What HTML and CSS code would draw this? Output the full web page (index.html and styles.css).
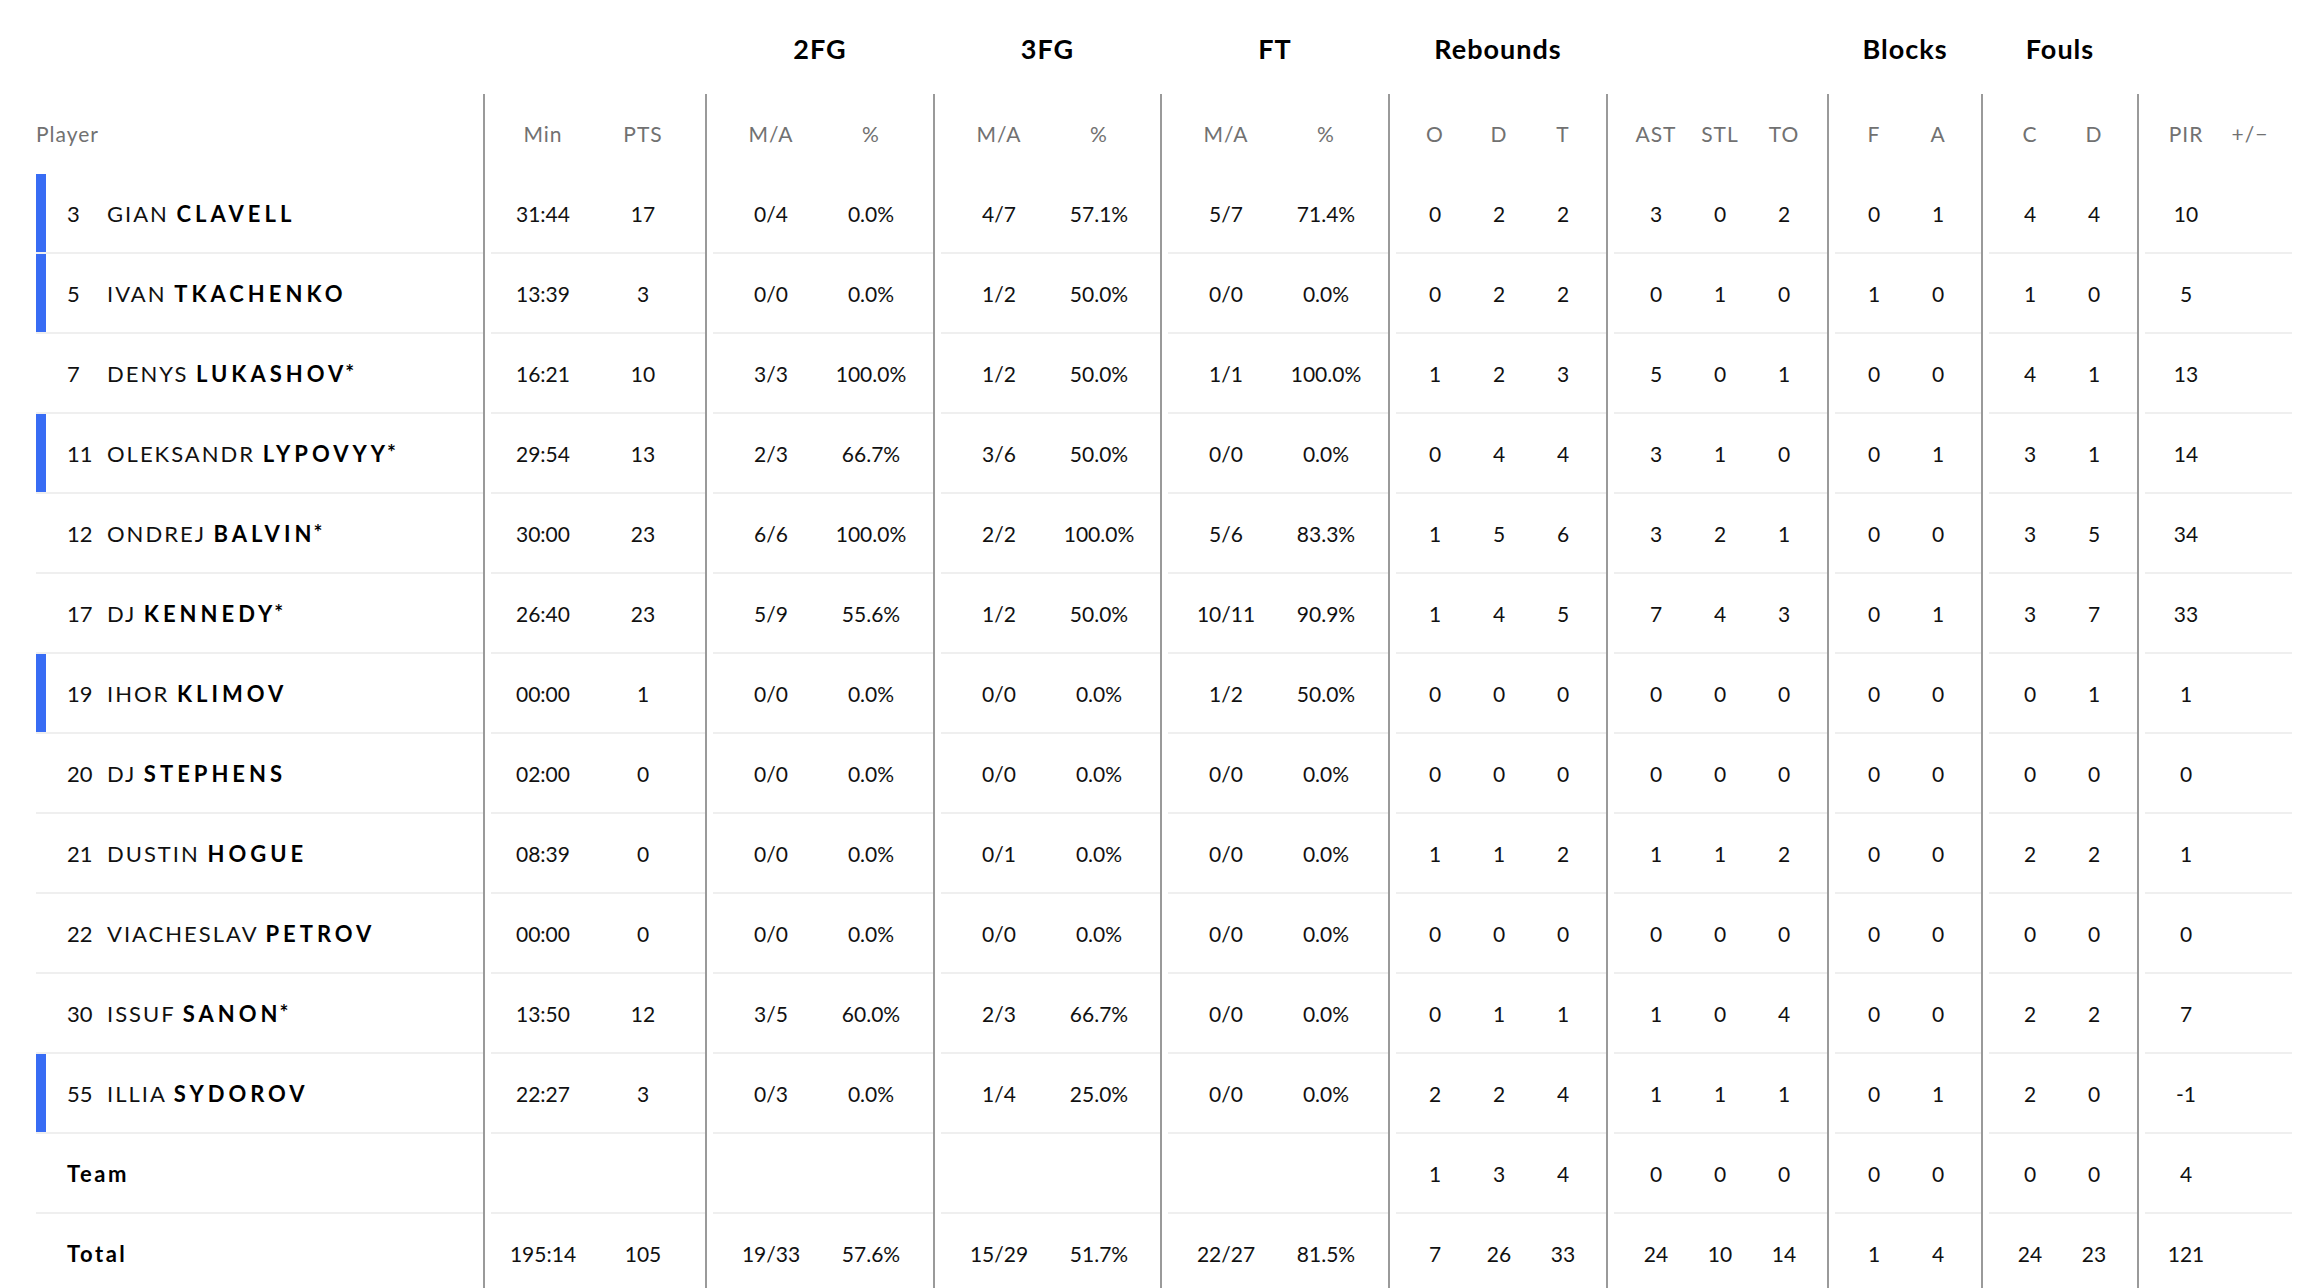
FILE: index.html
```html
<!DOCTYPE html>
<html lang="en">
<head>
<meta charset="utf-8">
<title>Box score</title>
<link rel="stylesheet" href="styles.css">
</head>
<body>
<div class="box">
  <div class="row titles">
    <div class="g gp"><div class="gi"></div></div>
    <div class="g gm"><div class="gi"></div></div>
    <div class="g gw"><div class="gi">2FG</div></div>
    <div class="g gw g3"><div class="gi">3FG</div></div>
    <div class="g gw"><div class="gi">FT</div></div>
    <div class="g gr"><div class="gi">Rebounds</div></div>
    <div class="g ga"><div class="gi"></div></div>
    <div class="g gb"><div class="gi">Blocks</div></div>
    <div class="g gf"><div class="gi">Fouls</div></div>
    <div class="g gz"><div class="gi"></div></div>
  </div>

  <div class="row head">
    <div class="g gp"><div class="gi">Player</div></div>
    <div class="g gm"><div class="gi"><span class="c">Min</span><span class="c">PTS</span></div></div>
    <div class="g gw"><div class="gi"><span class="c">M/A</span><span class="c">%</span></div></div>
    <div class="g gw g3"><div class="gi"><span class="c">M/A</span><span class="c">%</span></div></div>
    <div class="g gw"><div class="gi"><span class="c">M/A</span><span class="c">%</span></div></div>
    <div class="g gr"><div class="gi"><span class="c">O</span><span class="c">D</span><span class="c">T</span></div></div>
    <div class="g ga"><div class="gi"><span class="c">AST</span><span class="c">STL</span><span class="c">TO</span></div></div>
    <div class="g gb"><div class="gi"><span class="c">F</span><span class="c">A</span></div></div>
    <div class="g gf"><div class="gi"><span class="c">C</span><span class="c">D</span></div></div>
    <div class="g gz"><div class="gi"><span class="c">PIR</span><span class="c">+/−</span></div></div>
  </div>

  <div class="row">
    <div class="g gp"><div class="gi"><div class="pl bar"><span class="no">3</span><span class="nm">GIAN <b>CLAVELL</b></span></div></div></div>
    <div class="g gm"><div class="gi"><span class="c">31:44</span><span class="c">17</span></div></div>
    <div class="g gw"><div class="gi"><span class="c">0/4</span><span class="c">0.0%</span></div></div>
    <div class="g gw g3"><div class="gi"><span class="c">4/7</span><span class="c">57.1%</span></div></div>
    <div class="g gw"><div class="gi"><span class="c">5/7</span><span class="c">71.4%</span></div></div>
    <div class="g gr"><div class="gi"><span class="c">0</span><span class="c">2</span><span class="c">2</span></div></div>
    <div class="g ga"><div class="gi"><span class="c">3</span><span class="c">0</span><span class="c">2</span></div></div>
    <div class="g gb"><div class="gi"><span class="c">0</span><span class="c">1</span></div></div>
    <div class="g gf"><div class="gi"><span class="c">4</span><span class="c">4</span></div></div>
    <div class="g gz"><div class="gi"><span class="c">10</span><span class="c"></span></div></div>
  </div>

  <div class="row">
    <div class="g gp"><div class="gi"><div class="pl bar"><span class="no">5</span><span class="nm">IVAN <b>TKACHENKO</b></span></div></div></div>
    <div class="g gm"><div class="gi"><span class="c">13:39</span><span class="c">3</span></div></div>
    <div class="g gw"><div class="gi"><span class="c">0/0</span><span class="c">0.0%</span></div></div>
    <div class="g gw g3"><div class="gi"><span class="c">1/2</span><span class="c">50.0%</span></div></div>
    <div class="g gw"><div class="gi"><span class="c">0/0</span><span class="c">0.0%</span></div></div>
    <div class="g gr"><div class="gi"><span class="c">0</span><span class="c">2</span><span class="c">2</span></div></div>
    <div class="g ga"><div class="gi"><span class="c">0</span><span class="c">1</span><span class="c">0</span></div></div>
    <div class="g gb"><div class="gi"><span class="c">1</span><span class="c">0</span></div></div>
    <div class="g gf"><div class="gi"><span class="c">1</span><span class="c">0</span></div></div>
    <div class="g gz"><div class="gi"><span class="c">5</span><span class="c"></span></div></div>
  </div>

  <div class="row">
    <div class="g gp"><div class="gi"><div class="pl"><span class="no">7</span><span class="nm">DENYS <b>LUKASHOV<sup>*</sup></b></span></div></div></div>
    <div class="g gm"><div class="gi"><span class="c">16:21</span><span class="c">10</span></div></div>
    <div class="g gw"><div class="gi"><span class="c">3/3</span><span class="c">100.0%</span></div></div>
    <div class="g gw g3"><div class="gi"><span class="c">1/2</span><span class="c">50.0%</span></div></div>
    <div class="g gw"><div class="gi"><span class="c">1/1</span><span class="c">100.0%</span></div></div>
    <div class="g gr"><div class="gi"><span class="c">1</span><span class="c">2</span><span class="c">3</span></div></div>
    <div class="g ga"><div class="gi"><span class="c">5</span><span class="c">0</span><span class="c">1</span></div></div>
    <div class="g gb"><div class="gi"><span class="c">0</span><span class="c">0</span></div></div>
    <div class="g gf"><div class="gi"><span class="c">4</span><span class="c">1</span></div></div>
    <div class="g gz"><div class="gi"><span class="c">13</span><span class="c"></span></div></div>
  </div>

  <div class="row">
    <div class="g gp"><div class="gi"><div class="pl bar"><span class="no">11</span><span class="nm">OLEKSANDR <b>LYPOVYY<sup>*</sup></b></span></div></div></div>
    <div class="g gm"><div class="gi"><span class="c">29:54</span><span class="c">13</span></div></div>
    <div class="g gw"><div class="gi"><span class="c">2/3</span><span class="c">66.7%</span></div></div>
    <div class="g gw g3"><div class="gi"><span class="c">3/6</span><span class="c">50.0%</span></div></div>
    <div class="g gw"><div class="gi"><span class="c">0/0</span><span class="c">0.0%</span></div></div>
    <div class="g gr"><div class="gi"><span class="c">0</span><span class="c">4</span><span class="c">4</span></div></div>
    <div class="g ga"><div class="gi"><span class="c">3</span><span class="c">1</span><span class="c">0</span></div></div>
    <div class="g gb"><div class="gi"><span class="c">0</span><span class="c">1</span></div></div>
    <div class="g gf"><div class="gi"><span class="c">3</span><span class="c">1</span></div></div>
    <div class="g gz"><div class="gi"><span class="c">14</span><span class="c"></span></div></div>
  </div>

  <div class="row">
    <div class="g gp"><div class="gi"><div class="pl"><span class="no">12</span><span class="nm">ONDREJ <b>BALVIN<sup>*</sup></b></span></div></div></div>
    <div class="g gm"><div class="gi"><span class="c">30:00</span><span class="c">23</span></div></div>
    <div class="g gw"><div class="gi"><span class="c">6/6</span><span class="c">100.0%</span></div></div>
    <div class="g gw g3"><div class="gi"><span class="c">2/2</span><span class="c">100.0%</span></div></div>
    <div class="g gw"><div class="gi"><span class="c">5/6</span><span class="c">83.3%</span></div></div>
    <div class="g gr"><div class="gi"><span class="c">1</span><span class="c">5</span><span class="c">6</span></div></div>
    <div class="g ga"><div class="gi"><span class="c">3</span><span class="c">2</span><span class="c">1</span></div></div>
    <div class="g gb"><div class="gi"><span class="c">0</span><span class="c">0</span></div></div>
    <div class="g gf"><div class="gi"><span class="c">3</span><span class="c">5</span></div></div>
    <div class="g gz"><div class="gi"><span class="c">34</span><span class="c"></span></div></div>
  </div>

  <div class="row">
    <div class="g gp"><div class="gi"><div class="pl"><span class="no">17</span><span class="nm">DJ <b>KENNEDY<sup>*</sup></b></span></div></div></div>
    <div class="g gm"><div class="gi"><span class="c">26:40</span><span class="c">23</span></div></div>
    <div class="g gw"><div class="gi"><span class="c">5/9</span><span class="c">55.6%</span></div></div>
    <div class="g gw g3"><div class="gi"><span class="c">1/2</span><span class="c">50.0%</span></div></div>
    <div class="g gw"><div class="gi"><span class="c">10/11</span><span class="c">90.9%</span></div></div>
    <div class="g gr"><div class="gi"><span class="c">1</span><span class="c">4</span><span class="c">5</span></div></div>
    <div class="g ga"><div class="gi"><span class="c">7</span><span class="c">4</span><span class="c">3</span></div></div>
    <div class="g gb"><div class="gi"><span class="c">0</span><span class="c">1</span></div></div>
    <div class="g gf"><div class="gi"><span class="c">3</span><span class="c">7</span></div></div>
    <div class="g gz"><div class="gi"><span class="c">33</span><span class="c"></span></div></div>
  </div>

  <div class="row">
    <div class="g gp"><div class="gi"><div class="pl bar"><span class="no">19</span><span class="nm">IHOR <b>KLIMOV</b></span></div></div></div>
    <div class="g gm"><div class="gi"><span class="c">00:00</span><span class="c">1</span></div></div>
    <div class="g gw"><div class="gi"><span class="c">0/0</span><span class="c">0.0%</span></div></div>
    <div class="g gw g3"><div class="gi"><span class="c">0/0</span><span class="c">0.0%</span></div></div>
    <div class="g gw"><div class="gi"><span class="c">1/2</span><span class="c">50.0%</span></div></div>
    <div class="g gr"><div class="gi"><span class="c">0</span><span class="c">0</span><span class="c">0</span></div></div>
    <div class="g ga"><div class="gi"><span class="c">0</span><span class="c">0</span><span class="c">0</span></div></div>
    <div class="g gb"><div class="gi"><span class="c">0</span><span class="c">0</span></div></div>
    <div class="g gf"><div class="gi"><span class="c">0</span><span class="c">1</span></div></div>
    <div class="g gz"><div class="gi"><span class="c">1</span><span class="c"></span></div></div>
  </div>

  <div class="row">
    <div class="g gp"><div class="gi"><div class="pl"><span class="no">20</span><span class="nm">DJ <b>STEPHENS</b></span></div></div></div>
    <div class="g gm"><div class="gi"><span class="c">02:00</span><span class="c">0</span></div></div>
    <div class="g gw"><div class="gi"><span class="c">0/0</span><span class="c">0.0%</span></div></div>
    <div class="g gw g3"><div class="gi"><span class="c">0/0</span><span class="c">0.0%</span></div></div>
    <div class="g gw"><div class="gi"><span class="c">0/0</span><span class="c">0.0%</span></div></div>
    <div class="g gr"><div class="gi"><span class="c">0</span><span class="c">0</span><span class="c">0</span></div></div>
    <div class="g ga"><div class="gi"><span class="c">0</span><span class="c">0</span><span class="c">0</span></div></div>
    <div class="g gb"><div class="gi"><span class="c">0</span><span class="c">0</span></div></div>
    <div class="g gf"><div class="gi"><span class="c">0</span><span class="c">0</span></div></div>
    <div class="g gz"><div class="gi"><span class="c">0</span><span class="c"></span></div></div>
  </div>

  <div class="row">
    <div class="g gp"><div class="gi"><div class="pl"><span class="no">21</span><span class="nm">DUSTIN <b>HOGUE</b></span></div></div></div>
    <div class="g gm"><div class="gi"><span class="c">08:39</span><span class="c">0</span></div></div>
    <div class="g gw"><div class="gi"><span class="c">0/0</span><span class="c">0.0%</span></div></div>
    <div class="g gw g3"><div class="gi"><span class="c">0/1</span><span class="c">0.0%</span></div></div>
    <div class="g gw"><div class="gi"><span class="c">0/0</span><span class="c">0.0%</span></div></div>
    <div class="g gr"><div class="gi"><span class="c">1</span><span class="c">1</span><span class="c">2</span></div></div>
    <div class="g ga"><div class="gi"><span class="c">1</span><span class="c">1</span><span class="c">2</span></div></div>
    <div class="g gb"><div class="gi"><span class="c">0</span><span class="c">0</span></div></div>
    <div class="g gf"><div class="gi"><span class="c">2</span><span class="c">2</span></div></div>
    <div class="g gz"><div class="gi"><span class="c">1</span><span class="c"></span></div></div>
  </div>

  <div class="row">
    <div class="g gp"><div class="gi"><div class="pl"><span class="no">22</span><span class="nm">VIACHESLAV <b>PETROV</b></span></div></div></div>
    <div class="g gm"><div class="gi"><span class="c">00:00</span><span class="c">0</span></div></div>
    <div class="g gw"><div class="gi"><span class="c">0/0</span><span class="c">0.0%</span></div></div>
    <div class="g gw g3"><div class="gi"><span class="c">0/0</span><span class="c">0.0%</span></div></div>
    <div class="g gw"><div class="gi"><span class="c">0/0</span><span class="c">0.0%</span></div></div>
    <div class="g gr"><div class="gi"><span class="c">0</span><span class="c">0</span><span class="c">0</span></div></div>
    <div class="g ga"><div class="gi"><span class="c">0</span><span class="c">0</span><span class="c">0</span></div></div>
    <div class="g gb"><div class="gi"><span class="c">0</span><span class="c">0</span></div></div>
    <div class="g gf"><div class="gi"><span class="c">0</span><span class="c">0</span></div></div>
    <div class="g gz"><div class="gi"><span class="c">0</span><span class="c"></span></div></div>
  </div>

  <div class="row">
    <div class="g gp"><div class="gi"><div class="pl"><span class="no">30</span><span class="nm">ISSUF <b>SANON<sup>*</sup></b></span></div></div></div>
    <div class="g gm"><div class="gi"><span class="c">13:50</span><span class="c">12</span></div></div>
    <div class="g gw"><div class="gi"><span class="c">3/5</span><span class="c">60.0%</span></div></div>
    <div class="g gw g3"><div class="gi"><span class="c">2/3</span><span class="c">66.7%</span></div></div>
    <div class="g gw"><div class="gi"><span class="c">0/0</span><span class="c">0.0%</span></div></div>
    <div class="g gr"><div class="gi"><span class="c">0</span><span class="c">1</span><span class="c">1</span></div></div>
    <div class="g ga"><div class="gi"><span class="c">1</span><span class="c">0</span><span class="c">4</span></div></div>
    <div class="g gb"><div class="gi"><span class="c">0</span><span class="c">0</span></div></div>
    <div class="g gf"><div class="gi"><span class="c">2</span><span class="c">2</span></div></div>
    <div class="g gz"><div class="gi"><span class="c">7</span><span class="c"></span></div></div>
  </div>

  <div class="row">
    <div class="g gp"><div class="gi"><div class="pl bar"><span class="no">55</span><span class="nm">ILLIA <b>SYDOROV</b></span></div></div></div>
    <div class="g gm"><div class="gi"><span class="c">22:27</span><span class="c">3</span></div></div>
    <div class="g gw"><div class="gi"><span class="c">0/3</span><span class="c">0.0%</span></div></div>
    <div class="g gw g3"><div class="gi"><span class="c">1/4</span><span class="c">25.0%</span></div></div>
    <div class="g gw"><div class="gi"><span class="c">0/0</span><span class="c">0.0%</span></div></div>
    <div class="g gr"><div class="gi"><span class="c">2</span><span class="c">2</span><span class="c">4</span></div></div>
    <div class="g ga"><div class="gi"><span class="c">1</span><span class="c">1</span><span class="c">1</span></div></div>
    <div class="g gb"><div class="gi"><span class="c">0</span><span class="c">1</span></div></div>
    <div class="g gf"><div class="gi"><span class="c">2</span><span class="c">0</span></div></div>
    <div class="g gz"><div class="gi"><span class="c">-1</span><span class="c"></span></div></div>
  </div>

  <div class="row">
    <div class="g gp"><div class="gi"><div class="pl"><b class="sum">Team</b></div></div></div>
    <div class="g gm"><div class="gi"></div></div>
    <div class="g gw"><div class="gi"></div></div>
    <div class="g gw g3"><div class="gi"></div></div>
    <div class="g gw"><div class="gi"></div></div>
    <div class="g gr"><div class="gi"><span class="c">1</span><span class="c">3</span><span class="c">4</span></div></div>
    <div class="g ga"><div class="gi"><span class="c">0</span><span class="c">0</span><span class="c">0</span></div></div>
    <div class="g gb"><div class="gi"><span class="c">0</span><span class="c">0</span></div></div>
    <div class="g gf"><div class="gi"><span class="c">0</span><span class="c">0</span></div></div>
    <div class="g gz"><div class="gi"><span class="c">4</span><span class="c"></span></div></div>
  </div>

  <div class="row">
    <div class="g gp"><div class="gi"><div class="pl"><b class="sum">Total</b></div></div></div>
    <div class="g gm"><div class="gi"><span class="c">195:14</span><span class="c">105</span></div></div>
    <div class="g gw"><div class="gi"><span class="c">19/33</span><span class="c">57.6%</span></div></div>
    <div class="g gw g3"><div class="gi"><span class="c">15/29</span><span class="c">51.7%</span></div></div>
    <div class="g gw"><div class="gi"><span class="c">22/27</span><span class="c">81.5%</span></div></div>
    <div class="g gr"><div class="gi"><span class="c">7</span><span class="c">26</span><span class="c">33</span></div></div>
    <div class="g ga"><div class="gi"><span class="c">24</span><span class="c">10</span><span class="c">14</span></div></div>
    <div class="g gb"><div class="gi"><span class="c">1</span><span class="c">4</span></div></div>
    <div class="g gf"><div class="gi"><span class="c">24</span><span class="c">23</span></div></div>
    <div class="g gz"><div class="gi"><span class="c">121</span><span class="c"></span></div></div>
  </div>
</div>
</body>
</html>
```

FILE: styles.css
```css
html, body {
  margin: 0;
  padding: 0;
  background: #ffffff;
}

body {
  font-family: "Lato", "Liberation Sans", sans-serif;
  color: #111111;
  font-size: 21px;
}

.box {
  padding: 0 16px 0 36px;
}

.row {
  display: flex;
  height: 80px;
}

.g {
  flex: none;
  display: flex;
  border-left: 2px solid #9a9a9a;
  box-sizing: border-box;
}

.g .gi {
  flex: 1;
  display: flex;
  align-items: center;
  margin-left: 6px;
  border-bottom: 2px solid #efefef;
  box-sizing: border-box;
}

.gp { width: 447px; border-left: none; }
.gp .gi { margin-left: 0; }
.gm { width: 222px; }
.gm .gi { padding-left: 2px; }
.gw { width: 228px; }
.gw .gi { padding-left: 8px; }
.g3 { width: 227px; }
.gr { width: 218px; }
.gr .gi { padding-left: 7px; }
.ga { width: 221px; }
.ga .gi { padding-left: 10px; }
.gb { width: 154px; }
.gb .gi { padding-left: 7px; }
.gf { width: 156px; }
.gf .gi { padding-left: 9px; }
.gz { width: 155px; }
.gz .gi { padding-left: 9px; }

.c {
  flex: none;
  width: 64px;
  text-align: center;
  white-space: nowrap;
}

.gm .c, .gw .c { width: 100px; }

/* group titles */
.titles { height: 94px; }
.titles .g { border-left-color: transparent; }
.titles .gi {
  border-bottom: none;
  justify-content: center;
  font-weight: 700;
  font-size: 27px;
  letter-spacing: 1px;
  color: #000;
  padding-left: 0;
  margin-left: 0;
  padding-top: 2px;
}

/* column headings */
.head .gi {
  border-bottom-color: transparent;
  color: #717171;
  letter-spacing: 1px;
  font-size: 21px;
}

.pl {
  display: flex;
  align-items: center;
  height: 100%;
  width: 100%;
  box-sizing: border-box;
  border-left: 10px solid transparent;
  padding-left: 21px;
}

.pl.bar { border-left-color: #386cf4; }

.no {
  width: 40px;
  flex: none;
  font-size: 22px;
}

.nm {
  white-space: nowrap;
  font-size: 22px;
  letter-spacing: 2px;
}

.nm b {
  font-weight: 700;
  color: #000;
  letter-spacing: 4px;
}

.sum {
  font-weight: 700;
  color: #000;
  font-size: 22px;
  letter-spacing: 2.5px;
}

.nm sup {
  font-size: 21px;
  vertical-align: 2px;
  line-height: 0;
  letter-spacing: 0;
  margin-left: -2px;
}
```
